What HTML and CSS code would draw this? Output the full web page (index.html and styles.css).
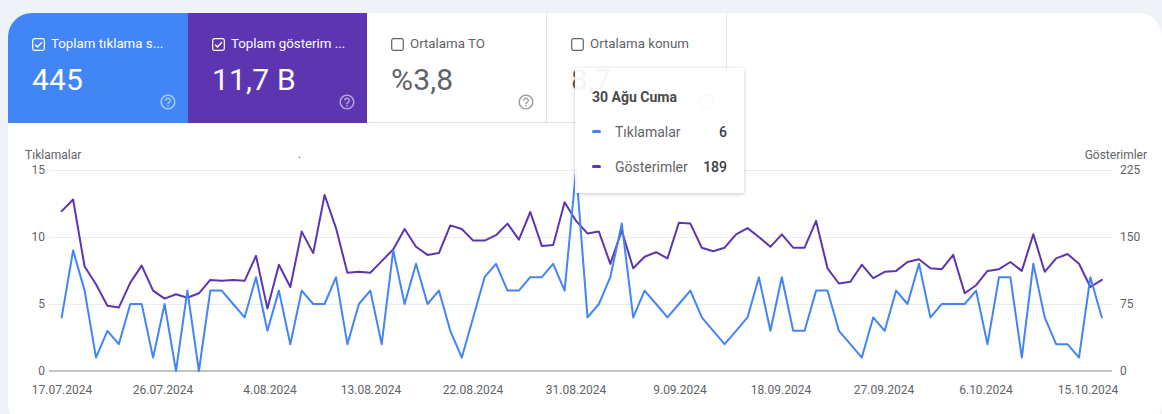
FILE: index.html
```html
<!DOCTYPE html>
<html lang="tr">
<head>
<meta charset="utf-8">
<title>Performans</title>
<link rel="stylesheet" href="styles.css">
</head>
<body>
<div class="card">
  <div class="tiles">
    <div class="tile tile-clicks">
      <div class="tile-label">
        <svg class="cb" viewBox="0 0 14 14"><rect x="0.75" y="0.75" width="12.5" height="12.5" rx="2" class="cb-box"/><polyline points="3.4,7.2 5.9,9.6 10.7,4.6" class="cb-check"/></svg>
        <span>Toplam tıklama s...</span>
      </div>
      <div class="tile-value">445</div>
      <svg class="help" viewBox="0 0 24 24"><path d="M11 18h2v-2h-2v2zm1-16C6.48 2 2 6.48 2 12s4.48 10 10 10 10-4.48 10-10S17.52 2 12 2zm0 18c-4.41 0-8-3.59-8-8s3.59-8 8-8 8 3.59 8 8-3.59 8-8 8zm0-14c-2.21 0-4 1.79-4 4h2c0-1.1.9-2 2-2s2 .9 2 2c0 2-3 1.75-3 5h2c0-2.25 3-2.5 3-5 0-2.21-1.79-4-4-4z"/></svg>
    </div>
    <div class="tile tile-imps">
      <div class="tile-label">
        <svg class="cb" viewBox="0 0 14 14"><rect x="0.75" y="0.75" width="12.5" height="12.5" rx="2" class="cb-box"/><polyline points="3.4,7.2 5.9,9.6 10.7,4.6" class="cb-check"/></svg>
        <span>Toplam gösterim ...</span>
      </div>
      <div class="tile-value">11,7 B</div>
      <svg class="help" viewBox="0 0 24 24"><path d="M11 18h2v-2h-2v2zm1-16C6.48 2 2 6.48 2 12s4.48 10 10 10 10-4.48 10-10S17.52 2 12 2zm0 18c-4.41 0-8-3.59-8-8s3.59-8 8-8 8 3.59 8 8-3.59 8-8 8zm0-14c-2.21 0-4 1.79-4 4h2c0-1.1.9-2 2-2s2 .9 2 2c0 2-3 1.75-3 5h2c0-2.25 3-2.5 3-5 0-2.21-1.79-4-4-4z"/></svg>
    </div>
    <div class="tile tile-off">
      <div class="tile-label">
        <svg class="cb" viewBox="0 0 14 14"><rect x="0.75" y="0.75" width="12.5" height="12.5" rx="2" class="cb-box"/></svg>
        <span>Ortalama TO</span>
      </div>
      <div class="tile-value">%3,8</div>
      <svg class="help" viewBox="0 0 24 24"><path d="M11 18h2v-2h-2v2zm1-16C6.48 2 2 6.48 2 12s4.48 10 10 10 10-4.48 10-10S17.52 2 12 2zm0 18c-4.41 0-8-3.59-8-8s3.59-8 8-8 8 3.59 8 8-3.59 8-8 8zm0-14c-2.21 0-4 1.79-4 4h2c0-1.1.9-2 2-2s2 .9 2 2c0 2-3 1.75-3 5h2c0-2.25 3-2.5 3-5 0-2.21-1.79-4-4-4z"/></svg>
    </div>
    <div class="tile tile-off">
      <div class="tile-label">
        <svg class="cb" viewBox="0 0 14 14"><rect x="0.75" y="0.75" width="12.5" height="12.5" rx="2" class="cb-box"/></svg>
        <span>Ortalama konum</span>
      </div>
      <div class="tile-value">8,7</div>
      <svg class="help" viewBox="0 0 24 24"><path d="M11 18h2v-2h-2v2zm1-16C6.48 2 2 6.48 2 12s4.48 10 10 10 10-4.48 10-10S17.52 2 12 2zm0 18c-4.41 0-8-3.59-8-8s3.59-8 8-8 8 3.59 8 8-3.59 8-8 8zm0-14c-2.21 0-4 1.79-4 4h2c0-1.1.9-2 2-2s2 .9 2 2c0 2-3 1.75-3 5h2c0-2.25 3-2.5 3-5 0-2.21-1.79-4-4-4z"/></svg>
    </div>
  </div>

  <div class="chart">
    <svg class="chart-svg" width="1154" height="291" viewBox="0 0 1154 291">
      <g class="grid">
        <line x1="41" y1="47.5" x2="1104" y2="47.5"/>
        <line x1="41" y1="114.5" x2="1104" y2="114.5"/>
        <line x1="41" y1="181.5" x2="1104" y2="181.5"/>
      </g>
      <line class="baseline" x1="41" y1="248" x2="1104" y2="248"/>
      <g class="axis-text">
        <text x="17" y="36">Tıklamalar</text>
        <text x="290" y="35">.</text>
        <text x="1139" y="36" text-anchor="end">Gösterimler</text>
        <text x="37" y="51" text-anchor="end">15</text>
        <text x="37" y="118" text-anchor="end">10</text>
        <text x="37" y="185" text-anchor="end">5</text>
        <text x="37" y="252" text-anchor="end">0</text>
        <text x="1112" y="51">225</text>
        <text x="1112" y="118">150</text>
        <text x="1112" y="185">75</text>
        <text x="1112" y="252">0</text>
        <g text-anchor="middle">
          <text x="54" y="271">17.07.2024</text>
          <text x="155" y="271">26.07.2024</text>
          <text x="262" y="271">4.08.2024</text>
          <text x="363" y="271">13.08.2024</text>
          <text x="465" y="271">22.08.2024</text>
          <text x="568" y="271">31.08.2024</text>
          <text x="672" y="271">9.09.2024</text>
          <text x="773" y="271">18.09.2024</text>
          <text x="876" y="271">27.09.2024</text>
          <text x="978" y="271">6.10.2024</text>
          <text x="1080" y="271">15.10.2024</text>
        </g>
      </g>
      <polyline id="line-imps" class="line line-imps" points=""/>
      <polyline id="line-clicks" class="line line-clicks" points=""/>
    </svg>
  </div>

  <div class="tooltip">
    <div class="tt-title">30 Ağu Cuma</div>
    <div class="tt-row">
      <span class="tt-dash dash-clicks"></span>
      <span class="tt-name">Tıklamalar</span>
      <span class="tt-val">6</span>
    </div>
    <div class="tt-row">
      <span class="tt-dash dash-imps"></span>
      <span class="tt-name">Gösterimler</span>
      <span class="tt-val">189</span>
    </div>
  </div>
</div>
<script src="chart.js"></script>
</body>
</html>
```

FILE: styles.css
```css
* { box-sizing: border-box; }

html, body {
  margin: 0;
  padding: 0;
}

body {
  background: #eff2f7;
  font-family: Roboto, "Noto Sans", "Liberation Sans", sans-serif;
  width: 1162px;
  height: 414px;
  overflow: hidden;
}

.card {
  position: relative;
  margin: 13px 0 0 8px;
  width: 1154px;
  height: 414px;
  background: #ffffff;
  border-radius: 24px;
  overflow: hidden;
}

.tiles {
  display: flex;
  height: 110px;
}

.tile {
  width: 180px;
  height: 110px;
  padding: 23px 0 12px 24px;
  display: flex;
  flex-direction: column;
}

.tile-clicks { background: #4285f4; color: #ffffff; }
.tile-imps { background: #5e35b1; color: #ffffff; width: 179px; }

.tile-off {
  background: #ffffff;
  color: #5f6368;
  border-right: 1px solid #e3e3e3;
  border-bottom: 1px solid #e3e3e3;
}

.tile-label {
  display: flex;
  align-items: center;
  gap: 6px;
  height: 16px;
  flex: none;
  font-size: 13.3px;
  font-weight: 400;
  line-height: 16px;
  white-space: nowrap;
}

.tile-off .tile-label { color: #5f6368; }

.cb {
  width: 13px;
  height: 13px;
  flex: none;
}

.cb-box {
  fill: none;
  stroke: #ffffff;
  stroke-width: 1.3;
}

.tile-off .cb-box { stroke: #5f6368; }

.cb-check {
  fill: none;
  stroke: #ffffff;
  stroke-width: 1.5;
}

.tile-value {
  flex: none;
  margin-top: 15px;
  font-size: 30px;
  line-height: 26px;
  font-weight: 400;
  letter-spacing: 0.2px;
}

.tile-off .tile-value { color: #5f6368; }

.help {
  flex: none;
  width: 18px;
  height: 18px;
  margin-top: auto;
  align-self: flex-end;
  margin-right: 11px;
  fill: rgba(255, 255, 255, 0.55);
}

.tile-off .help { fill: #9aa0a6; }

.chart {
  height: 291px;
}

.chart-svg { display: block; }

.grid line {
  stroke: #ececec;
  stroke-width: 1;
}

.baseline {
  stroke: #b0b0b0;
  stroke-width: 1.5;
}

.axis-text text {
  font-family: Roboto, "Noto Sans", "Liberation Sans", sans-serif;
  font-size: 12px;
  fill: #5f6368;
}

.line {
  fill: none;
  stroke-width: 2;
  stroke-linejoin: round;
  stroke-linecap: round;
}

.line-clicks { stroke: #4285f4; }
.line-imps { stroke: #5e35b1; }

.tooltip {
  position: absolute;
  left: 567px;
  top: 55px;
  width: 169px;
  height: 125px;
  padding: 20px 17px 0 17px;
  background: rgba(255, 255, 255, 0.93);
  border-radius: 2px;
  box-shadow: 0 1px 4px rgba(0, 0, 0, 0.22);
}

.tt-title {
  font-size: 14px;
  font-weight: 700;
  color: #4a4a4a;
  line-height: 18px;
  margin-bottom: 8px;
}

.tt-row {
  display: flex;
  align-items: center;
  height: 35px;
  font-size: 14px;
  color: #5f6368;
}

.tt-dash {
  width: 9px;
  height: 3px;
  border-radius: 2px;
  margin-right: 14px;
  flex: none;
}

.dash-clicks { background: #4285f4; }
.dash-imps { background: #5e35b1; }

.tt-name { flex: 1; }

.tt-val {
  font-weight: 500;
  color: #3c4043;
}
```

FILE: chart.js
```js
(function () {
  var clicks = [4,9,6,1,3,2,5,5,1,5,0,6,0,6,6,5,4,7,3,6,2,6,5,5,7,2,5,6,2,9,5,8,5,6,3,1,4,7,8,6,6,7,7,8,6,15,4,5,7,11,4,6,5,4,5,6,4,3,2,3,4,7,3,7,3,3,6,6,3,2,1,4,3,6,5,8,4,5,5,5,6,2,7,7,1,8,4,2,2,1,7,4];
  var imps = [179,192,117,97,73,71,99,118,90,81,86,82,87,102,101,102,101,129,70,119,94,156,132,197,160,110,111,110,123,136,159,139,130,132,163,159,146,146,152,165,147,178,140,141,189,168,154,156,120,157,115,128,133,126,166,165,138,134,138,153,160,150,139,153,138,138,168,115,98,100,119,104,111,112,122,125,115,114,130,87,96,112,114,122,112,153,111,126,131,120,94,102];
  var x0 = 53.7, step = 11.43, base = 248;
  function pts(arr, scale) {
    return arr.map(function (v, i) {
      return (x0 + i * step).toFixed(1) + ',' + (base - v * scale).toFixed(1);
    }).join(' ');
  }
  document.getElementById('line-clicks').setAttribute('points', pts(clicks, 13.4));
  document.getElementById('line-imps').setAttribute('points', pts(imps, 201 / 225));
})();
```
